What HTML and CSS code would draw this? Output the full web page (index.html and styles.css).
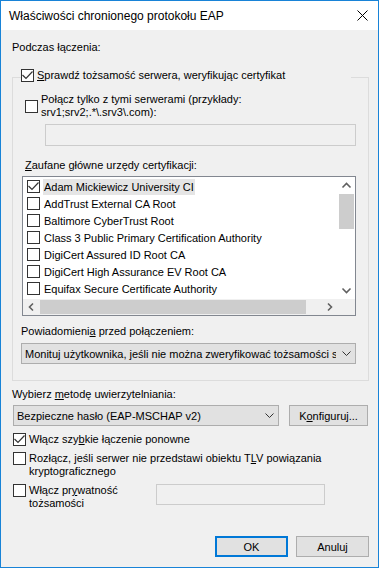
FILE: index.html
```html
<!DOCTYPE html>
<html lang="pl">

<head>
    <meta charset="utf-8">
    <title>Właściwości chronionego protokołu EAP</title>
    <link rel="stylesheet" href="styles.css">
</head>

<body>
    <div class="window">
        <div class="titlebar">
            <span class="title">Właściwości chronionego protokołu EAP</span>
            <svg class="close" width="11" height="11" viewBox="0 0 11 11">
                <path d="M0.5 0.5L10.5 10.5M10.5 0.5L0.5 10.5" />
            </svg>
        </div>

        <div class="content">
            <div class="caption">Podczas łączenia:</div>

            <fieldset class="group">
                <legend class="check legend">
                    <span class="box"><svg viewBox="0 0 11 11"><path d="M0.5 5L4 8.5L10.5 1.5" /></svg></span>
                    <span><u>S</u>prawdź tożsamość serwera, weryfikując certyfikat</span>
                </legend>

                <div class="check servers">
                    <span class="box"></span>
                    <span class="text">Połącz tylko z tymi serwerami (przykłady: srv1;srv2;.*\.srv3\.com):</span>
                </div>
                <div class="textbox servers-input"></div>

                <div class="caption ca-label"><u>Z</u>aufane główne urzędy certyfikacji:</div>
                <div class="listbox">
                    <div class="items">
                        <div class="item">
                            <span class="box"><svg viewBox="0 0 11 11"><path d="M0.5 5L4 8.5L10.5 1.5" /></svg></span>
                            <span class="name selected">Adam Mickiewicz University CI</span>
                        </div>
                        <div class="item"><span class="box"></span><span class="name">AddTrust External CA Root</span></div>
                        <div class="item"><span class="box"></span><span class="name">Baltimore CyberTrust Root</span></div>
                        <div class="item"><span class="box"></span><span class="name">Class 3 Public Primary Certification Authority</span></div>
                        <div class="item"><span class="box"></span><span class="name">DigiCert Assured ID Root CA</span></div>
                        <div class="item"><span class="box"></span><span class="name">DigiCert High Assurance EV Root CA</span></div>
                        <div class="item"><span class="box"></span><span class="name">Equifax Secure Certificate Authority</span></div>
                    </div>
                    <div class="vscroll">
                        <div class="arrow"><svg viewBox="0 0 17 17"><path d="M4.5 10.5L8.5 6.5L12.5 10.5" /></svg></div>
                        <div class="thumb"></div>
                        <div class="track"></div>
                        <div class="arrow"><svg viewBox="0 0 17 17"><path d="M4.5 6.5L8.5 10.5L12.5 6.5" /></svg></div>
                    </div>
                    <div class="hscroll">
                        <div class="arrow"><svg viewBox="0 0 17 16"><path d="M10 4.5L6.5 8L10 11.5" /></svg></div>
                        <div class="thumb"></div>
                        <div class="track"></div>
                        <div class="arrow"><svg viewBox="0 0 17 16"><path d="M7 4.5L10.5 8L7 11.5" /></svg></div>
                    </div>
                    <div class="corner"></div>
                </div>

                <div class="caption notify-label">Powiadomieni<u>a</u> przed połączeniem:</div>
                <div class="combo wide">
                    <span class="value">Monituj użytkownika, jeśli nie można zweryfikować tożsamości serwera</span>
                    <span class="drop"><svg viewBox="0 0 9 5"><path d="M0.5 0.5L4.5 4.5L8.5 0.5" /></svg></span>
                </div>
            </fieldset>

            <div class="caption method-label">Wybierz <u>m</u>etodę uwierzytelniania:</div>
            <div class="method-row">
                <div class="combo method">
                    <span class="value">Bezpieczne hasło (EAP-MSCHAP v2)</span>
                    <span class="drop"><svg viewBox="0 0 9 5"><path d="M0.5 0.5L4.5 4.5L8.5 0.5" /></svg></span>
                </div>
                <button class="button configure">K<u>o</u>nfiguruj...</button>
            </div>

            <div class="check fast">
                <span class="box"><svg viewBox="0 0 11 11"><path d="M0.5 5L4 8.5L10.5 1.5" /></svg></span>
                <span>Włącz szy<u>b</u>kie łączenie ponowne</span>
            </div>

            <div class="check unbind">
                <span class="box"></span>
                <span>Rozłącz, jeśli serwer nie przedstawi obiektu T<u>L</u>V powiązania kryptograficznego</span>
            </div>

            <div class="privacy-row">
                <div class="check privacy">
                    <span class="box"></span>
                    <span>Włącz pr<u>y</u>watność tożsamości</span>
                </div>
                <div class="textbox privacy-input"></div>
            </div>

            <div class="footer">
                <button class="button default">OK</button>
                <button class="button">Anuluj</button>
            </div>
        </div>
    </div>
</body>

</html>
```

FILE: styles.css
```css
* {
    margin: 0;
    padding: 0;
    box-sizing: border-box;
}

body {
    font-family: "Liberation Sans", Arial, sans-serif;
    font-size: 11px;
    color: #000;
    background: #fff;
}

.window {
    width: 379px;
    height: 568px;
    border: 1px solid #1883d7;
    display: flex;
    flex-direction: column;
}

.titlebar {
    height: 29px;
    flex: none;
    display: flex;
    align-items: center;
    justify-content: space-between;
    padding: 0 10px 0 8px;
    background: #fff;
}

.title {
    font-size: 12px;
}

.close {
    fill: none;
    stroke: #000;
    stroke-width: 1;
}

.content {
    flex: 1;
    display: flex;
    flex-direction: column;
    padding: 10px 9px 10px 11px;
    background: #f0f0f0;
}

.caption {
    height: 15px;
    line-height: 15px;
    white-space: nowrap;
}

/* checkboxes */

.check {
    display: flex;
    align-items: center;
    gap: 3px;
}

.box {
    flex: none;
    display: flex;
    width: 13px;
    height: 13px;
    border: 1px solid #333;
    background: #fff;
}

.box svg {
    width: 11px;
    height: 11px;
    fill: none;
    stroke: #333;
    stroke-width: 1.2;
}

/* group box */

.group {
    min-width: 0;
    margin-top: 14px;
    border: 1px solid #dcdcdc;
    padding: 0 11px 16px 8px;
}

.legend {
    width: 330px;
    height: 17px;
    padding: 0;
    align-items: flex-start;
    line-height: 13px;
    white-space: nowrap;
}

.servers {
    margin: 7px 0 0 4px;
    line-height: 13px;
}

.servers .text {
    width: 290px;
}

.textbox {
    border: 1px solid #ccc;
    background: #f0f0f0;
}

.servers-input {
    width: 311px;
    height: 22px;
    margin: 5px 0 0 24px;
}

.ca-label {
    margin: 12px 0 0 4px;
}

/* certificate list */

.listbox {
    display: grid;
    grid-template-columns: 1fr 17px;
    grid-template-rows: 1fr 16px;
    width: 334px;
    height: 140px;
    margin: 3px 0 0 1px;
    border: 1px solid #828790;
    background: #fff;
}

.items {
    overflow: hidden;
    padding-top: 1px;
}

.item {
    display: flex;
    align-items: center;
    gap: 3px;
    height: 17px;
    padding-left: 4px;
    white-space: nowrap;
}

.name {
    padding: 0 1px;
    line-height: 16px;
}

.name.selected {
    background: #e5e5e5;
}

.vscroll {
    display: flex;
    flex-direction: column;
    background: #fff;
}

.vscroll .arrow {
    height: 17px;
}

.vscroll .thumb {
    height: 35px;
    margin: 0 1px;
    background: #cdcdcd;
}

.track {
    flex: 1;
}

.hscroll {
    display: flex;
    background: #f0f0f0;
}

.hscroll .arrow {
    width: 17px;
}

.hscroll .thumb {
    width: 266px;
    margin: 1px 0;
    background: #cdcdcd;
}

.arrow svg {
    display: block;
    width: 100%;
    height: 100%;
    fill: none;
    stroke: #606060;
    stroke-width: 1.6;
}

.corner {
    background: #f0f0f0;
}

/* combo boxes and buttons */

.notify-label {
    margin-top: 8px;
}

.combo {
    display: flex;
    align-items: center;
    height: 21px;
    padding-left: 3px;
    border: 1px solid #adadad;
    background: #e1e1e1;
}

.combo .value {
    flex: 1;
    overflow: hidden;
    white-space: nowrap;
    margin-right: 2px;
}

.drop {
    flex: none;
    display: flex;
    justify-content: center;
    width: 17px;
}

.drop svg {
    width: 9px;
    height: 5px;
    fill: none;
    stroke: #333;
    stroke-width: 1;
}

.wide {
    width: 335px;
    margin-top: 4px;
}

.method-label {
    margin-top: 6px;
}

.method-row {
    display: flex;
    margin-top: 3px;
}

.method {
    width: 266px;
    margin-left: 1px;
}

.button {
    height: 21px;
    font: inherit;
    color: #000;
    border: 1px solid #adadad;
    background: #e1e1e1;
}

.configure {
    width: 79px;
    margin-left: 10px;
}

.fast {
    margin: 6px 0 0 1px;
    line-height: 15px;
}

.unbind {
    align-items: flex-start;
    margin: 5px 0 0 1px;
    line-height: 13px;
}

.privacy-row {
    display: flex;
    align-items: flex-start;
    margin: 6px 0 0 1px;
}

.privacy {
    align-items: flex-start;
    width: 143px;
    line-height: 13px;
}

.privacy .box + span {
    width: 124px;
}

.privacy-input {
    width: 169px;
    height: 21px;
}

.footer {
    display: flex;
    justify-content: flex-end;
    gap: 8px;
    margin-top: auto;
}

.footer .button {
    width: 73px;
}

.default {
    border: 2px solid #0078d7;
}
```
